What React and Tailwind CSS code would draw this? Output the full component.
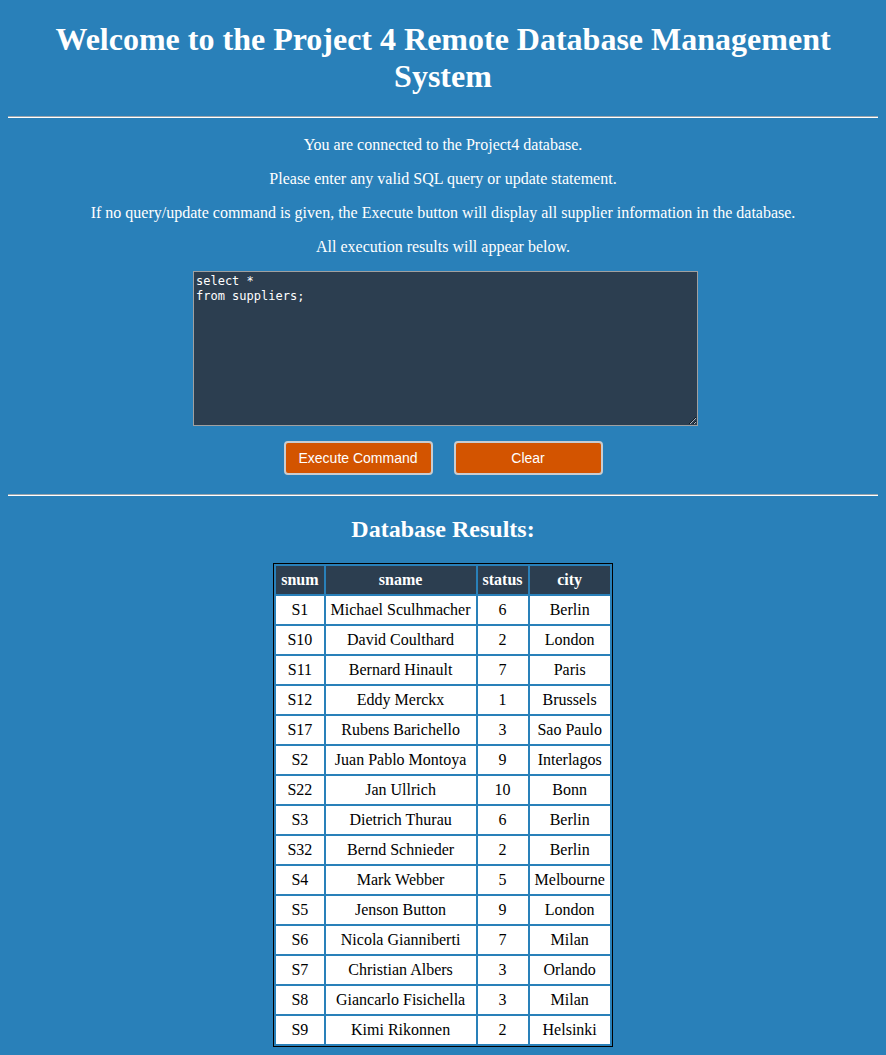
import { useState } from 'react';

const suppliers = [
  ['S1', 'Michael Sculhmacher', '6', 'Berlin'],
  ['S10', 'David Coulthard', '2', 'London'],
  ['S11', 'Bernard Hinault', '7', 'Paris'],
  ['S12', 'Eddy Merckx', '1', 'Brussels'],
  ['S17', 'Rubens Barichello', '3', 'Sao Paulo'],
  ['S2', 'Juan Pablo Montoya', '9', 'Interlagos'],
  ['S22', 'Jan Ullrich', '10', 'Bonn'],
  ['S3', 'Dietrich Thurau', '6', 'Berlin'],
  ['S32', 'Bernd Schnieder', '2', 'Berlin'],
  ['S4', 'Mark Webber', '5', 'Melbourne'],
  ['S5', 'Jenson Button', '9', 'London'],
  ['S6', 'Nicola Gianniberti', '7', 'Milan'],
  ['S7', 'Christian Albers', '3', 'Orlando'],
  ['S8', 'Giancarlo Fisichella', '3', 'Milan'],
  ['S9', 'Kimi Rikonnen', '2', 'Helsinki'],
];

function Rule() {
  return <hr className="border-0 border-t border-t-[#9aa5ad] border-b border-b-white" />;
}

export default function App() {
  const [query, setQuery] = useState('select *\nfrom suppliers;');

  return (
    <div className="min-h-screen bg-[#2980b9] text-white font-['Liberation_Serif',serif] px-2 pt-[21px] pb-4">
      <h1 className="text-[32px] leading-[37px] font-bold text-center mb-[21px]">
        Welcome to the Project 4 Remote Database Management System
      </h1>
      <Rule />

      <div className="mt-[18px] flex flex-col gap-4 text-center text-[16px] leading-[18px]">
        <p>You are connected to the Project4 database.</p>
        <p>Please enter any valid SQL query or update statement.</p>
        <p>
          If no query/update command is given, the Execute button will display
          all supplier information in the database.
        </p>
        <p>All execution results will appear below.</p>
      </div>

      <form className="mt-[15px] flex flex-col items-center">
        <div className="pl-[5px]">
          <textarea
            value={query}
            onChange={(e) => setQuery(e.target.value)}
            className="block w-[505px] h-[155px] bg-[#2c3e50] text-white border border-[#a0a0a0] px-[2px] py-[2px] font-['DejaVu_Sans_Mono',monospace] text-[12px] leading-[15px] outline-none"
          />
        </div>
        <div className="mt-[15px] flex gap-[21px] font-['Liberation_Sans',sans-serif] text-[14px]">
          <button
            type="button"
            className="w-[149px] h-[34px] bg-[#d35400] text-white border-2 border-[#c8ccd0] rounded-[4px] cursor-pointer"
          >
            Execute Command
          </button>
          <button
            type="button"
            onClick={() => setQuery('')}
            className="w-[149px] h-[34px] bg-[#d35400] text-white border-2 border-[#c8ccd0] rounded-[4px] cursor-pointer"
          >
            Clear
          </button>
        </div>
      </form>

      <div className="mt-[19px]">
        <Rule />
      </div>

      <h2 className="mt-[19px] mb-5 text-[24px] leading-[28px] font-bold text-center">Database Results:</h2>

      <table className="mx-auto border border-black border-separate border-spacing-[2px] text-[16px] leading-[18px] text-center">
        <thead>
          <tr className="bg-[#2c3e50] text-white">
            <th className="px-[5px] py-[5px]">snum</th>
            <th className="px-[5px] py-[5px]">sname</th>
            <th className="px-[5px] py-[5px]">status</th>
            <th className="px-[5px] py-[5px]">city</th>
          </tr>
        </thead>
        <tbody>
          {suppliers.map((row) => (
            <tr key={row[0]} className="bg-white text-black">
              {row.map((cell, i) => (
                <td key={i} className="px-[5px] py-[5px]">
                  {cell}
                </td>
              ))}
            </tr>
          ))}
        </tbody>
      </table>
    </div>
  );
}
